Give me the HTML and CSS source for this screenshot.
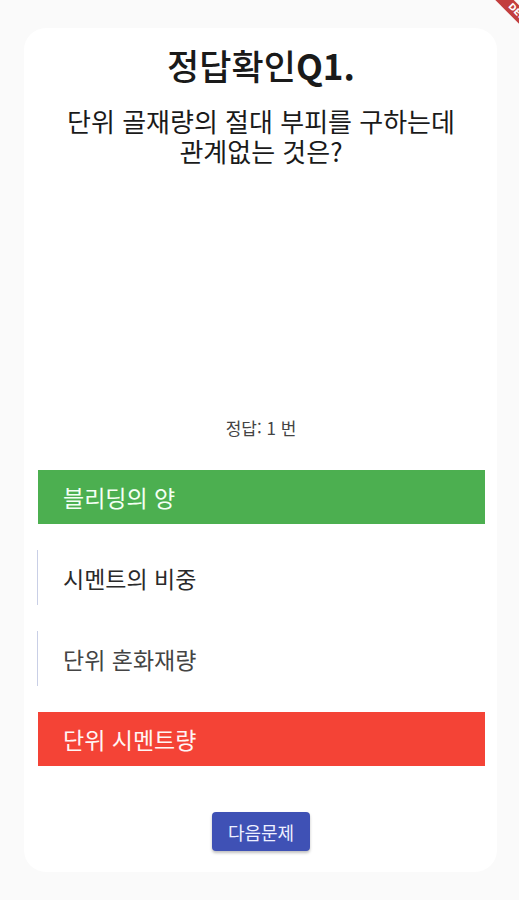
FILE: index.html
```html
<!DOCTYPE html>
<html lang="ko">
<head>
  <meta charset="UTF-8" />
  <meta name="viewport" content="width=device-width, initial-scale=1.0" />
  <title>정답확인</title>
  <link rel="stylesheet" href="styles.css">
</head>
<body>
  <div class="card">
    <h1 class="title">정답확인<span class="num">Q1.</span></h1>
    <p class="question">단위 골재량의 절대 부피를 구하는데<br>관계없는 것은?</p>

    <!-- empty picture area -->
    <div class="picture"></div>

    <div class="answer">정답: 1 번</div>

    <div class="options">
      <div class="option correct">블리딩의 양</div>
      <div class="option plain">시멘트의 비중</div>
      <div class="option plain dim">단위 혼화재량</div>
      <div class="option wrong">단위 시멘트량</div>
    </div>

    <button class="next-button">다음문제</button>
  </div>

  <!-- debug ribbon in the corner -->
  <div class="debug-banner">DEBUG</div>
</body>
</html>
```

FILE: styles.css
```css
*, *::before, *::after {
  box-sizing: border-box;
}

html, body {
  margin: 0;
  padding: 0;
  height: 100vh;
  overflow: hidden;
}

body {
  background: #fafafa;
  font-family: "Noto Sans CJK KR", "Noto Sans", sans-serif;
  color: #212121;
  padding: 28px 22px 28px 24px;
}

/* White card holding the question */
.card {
  background: #ffffff;
  border-radius: 22px;
  height: 844px;
  padding: 17px 12px 21px 13px;
  display: flex;
  flex-direction: column;
  align-items: center;
}

.title {
  margin: 0;
  font-size: 35px;
  line-height: 40px;
  font-weight: 500;
  color: #1a1a1a;
}

.title .num {
  font-weight: 700;
}

.question {
  margin: 21px 0 0;
  font-size: 26px;
  line-height: 30px;
  text-align: center;
  color: #1a1a1a;
}

.picture {
  height: 252px;
}

.answer {
  font-size: 17px;
  line-height: 20px;
  color: #444;
}

.options {
  align-self: stretch;
  display: flex;
  flex-direction: column;
  gap: 26px;
  margin-top: 32px;
}

.option {
  height: 54px;
  display: flex;
  align-items: center;
  padding-left: 25px;
  font-size: 23px;
}

.correct {
  background: #4caf50;
  color: #f4fff4;
  margin-left: 1px;
}

.wrong {
  background: #f44336;
  color: #fff5f4;
  margin-left: 1px;
}

/* Unselected answers only show a thin line on the left */
.plain {
  border-left: 1px solid #c9cfe6;
  padding-left: 25px;
  color: #2a2a2a;
  height: 55px;
}

.dim {
  color: #444;
}

.next-button {
  margin-top: 46px;
  width: 98px;
  height: 39px;
  background: #3f51b5;
  color: #eef0ff;
  border: none;
  border-radius: 4px;
  font-family: "Noto Sans CJK KR", "Noto Sans", sans-serif;
  font-size: 18px;
  cursor: pointer;
  box-shadow: 0 2px 3px rgba(0, 0, 0, 0.25);
}

.debug-banner {
  position: absolute;
  left: 462px;
  top: 11px;
  width: 120px;
  height: 13px;
  line-height: 13px;
  background: rgba(183, 28, 28, 0.85);
  color: #ffffff;
  font-family: "DejaVu Sans", sans-serif;
  font-size: 9px;
  font-weight: bold;
  text-align: center;
  transform: rotate(45deg);
}
```
